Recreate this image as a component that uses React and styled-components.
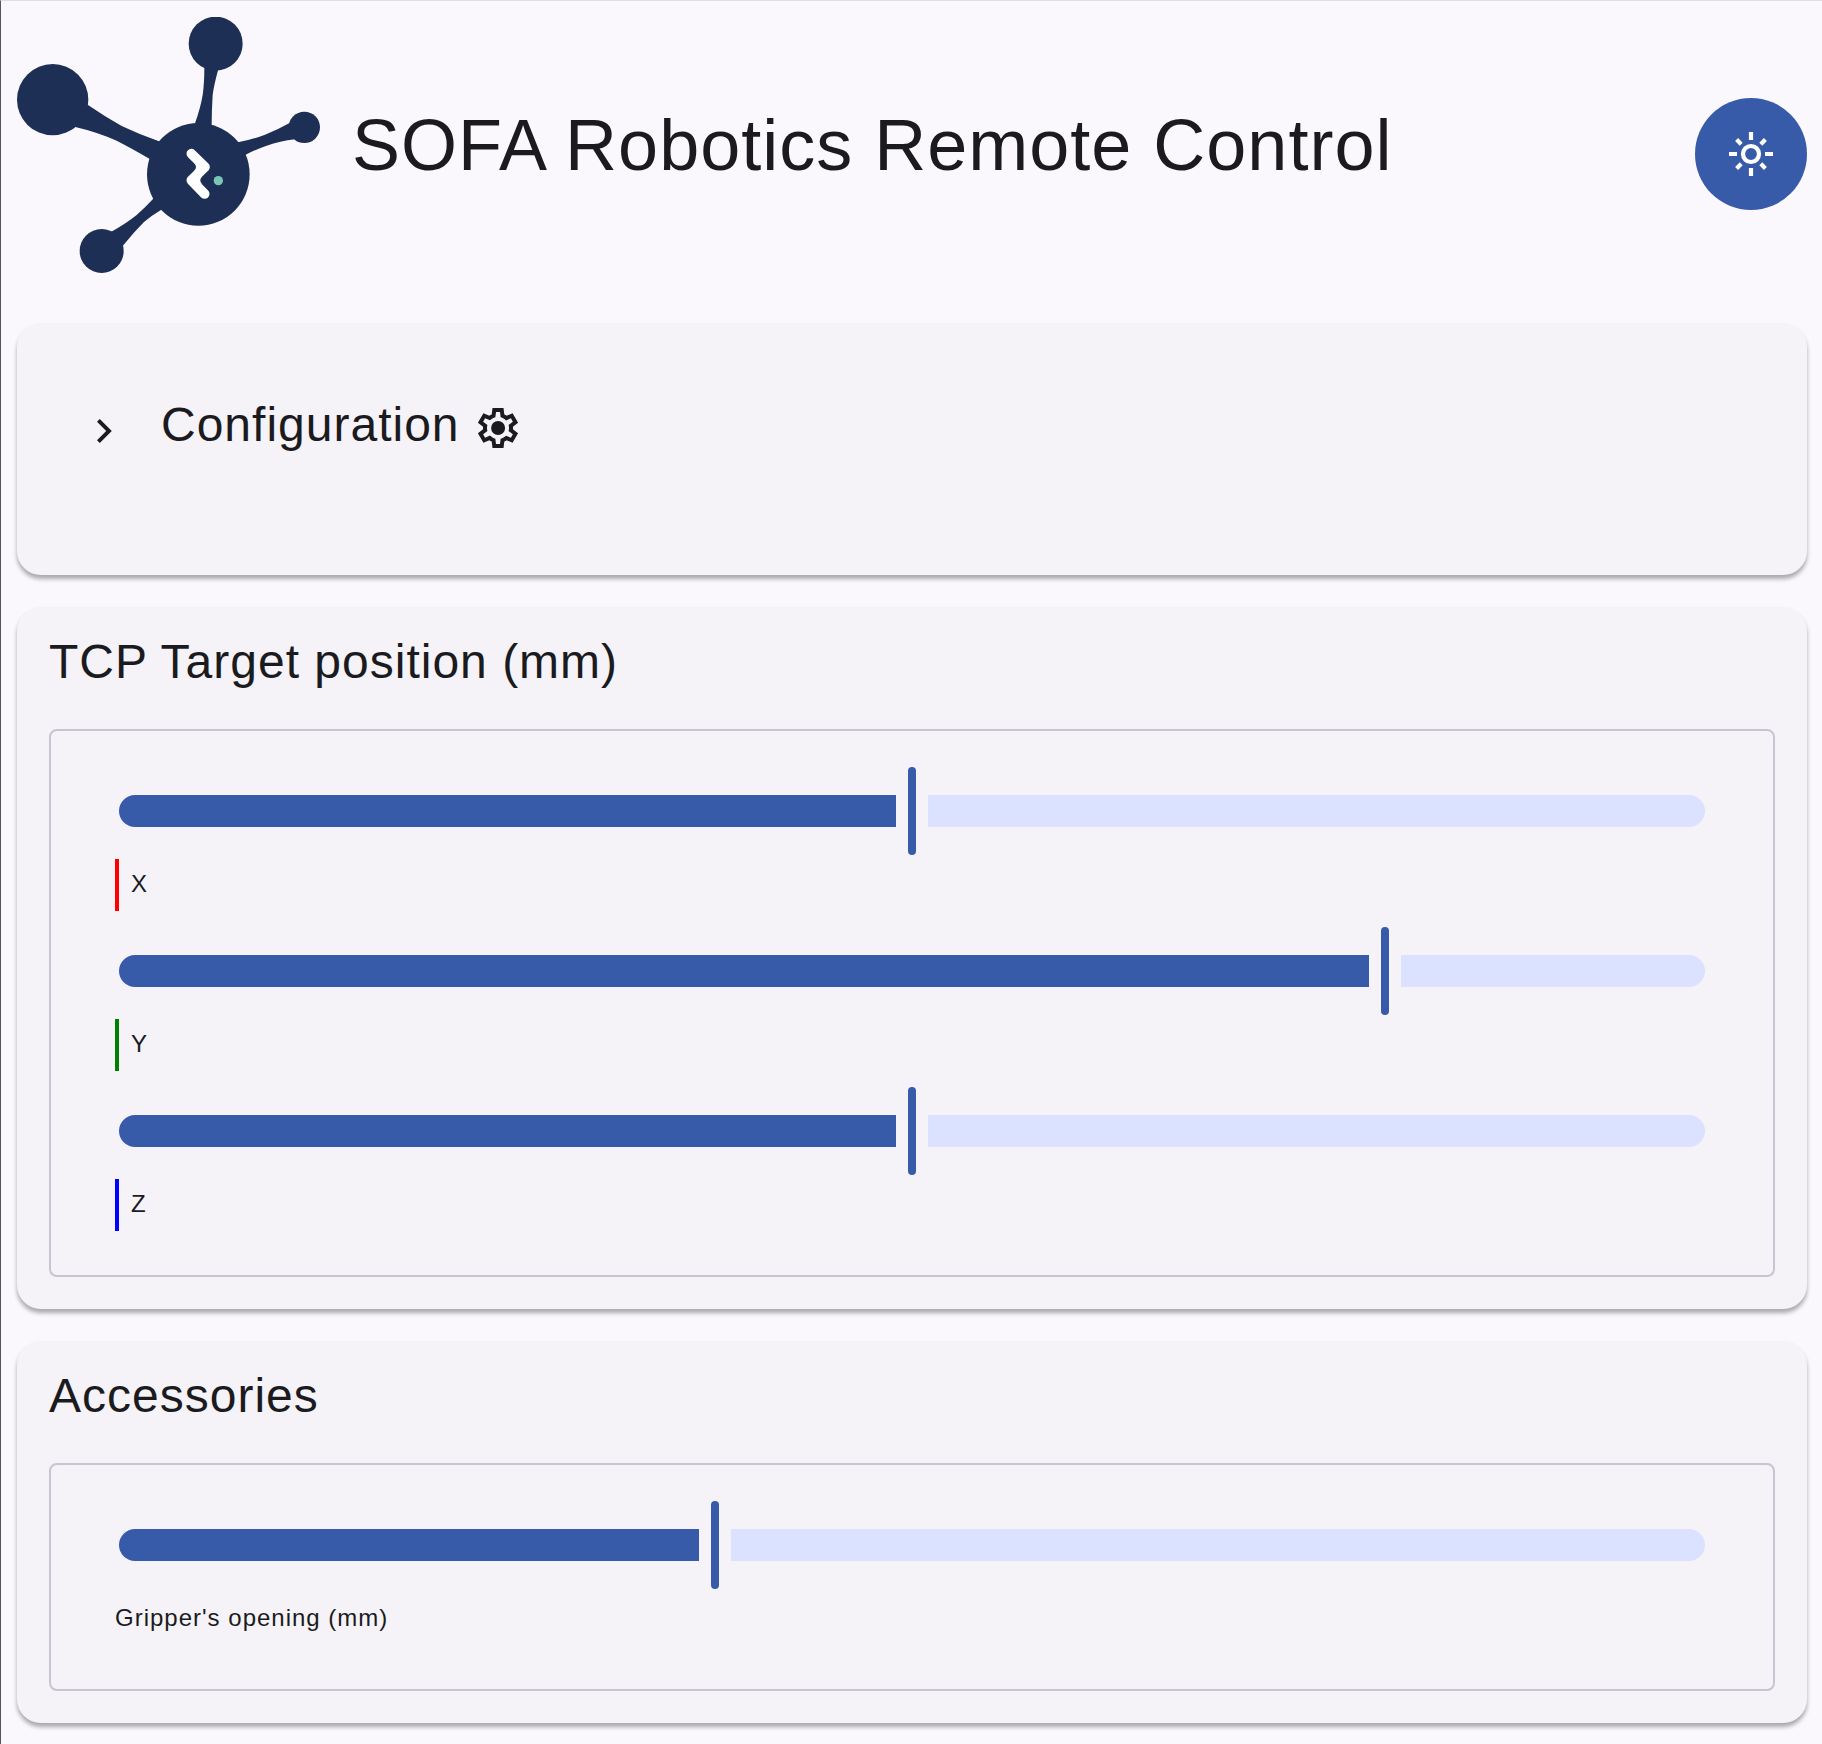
import React, { useId, useState } from "react";
import styled, { createGlobalStyle, ThemeProvider } from "styled-components";

const theme = {
  primary: "#385ba9",
  primaryContainer: "#dae2ff",
  background: "#faf8fd",
  card: "#f5f3f7",
  text: "#1b1b1f",
  outline: "#c5c6d0",
  navy: "#1d2f55",
  mint: "#7cc5b4",
};

const GlobalStyle = createGlobalStyle`
  *, *::before, *::after { box-sizing: border-box; }
  body {
    margin: 0;
    background: ${theme.background};
    color: ${theme.text};
    font-family: "Liberation Sans", Arial, Helvetica, sans-serif;
    font-size: 24px;
    letter-spacing: 1px;
  }
  h1, h2 { margin: 0; font-weight: 400; }
`;

const Page = styled.div`
  min-height: 100vh;
  padding: 16px 15px 20px 16px;
  border-top: 1px solid #dee0df;
  border-left: 1px solid #57545a;
`;

const Header = styled.header`
  display: flex;
  align-items: center;
  justify-content: space-between;
  margin-bottom: 32px;
`;

const Brand = styled.div`
  display: flex;
  align-items: center;
  gap: 32px;
  padding-bottom: 18px;
`;

const Logo = styled.svg`
  display: block;
  width: 303px;
  height: 256px;
  flex: none;
`;

const Title = styled.h1`
  font-size: 72px;
  line-height: 80px;
`;

const RoundButton = styled.button`
  display: grid;
  place-items: center;
  flex: none;
  width: 112px;
  height: 112px;
  padding: 0;
  border: 0;
  border-radius: 50%;
  background: ${(p) => p.theme.primary};
  color: #ffffff;
  cursor: pointer;
`;

const Icon = styled.svg`
  width: 48px;
  height: 48px;
  flex: none;
  fill: currentColor;
  vertical-align: middle;
`;

const Main = styled.main`
  display: flex;
  flex-direction: column;
  gap: 32px;
`;

const Card = styled.section`
  padding: ${(p) => (p.$roomy ? "72px 64px 120px" : "32px")};
  border-radius: 24px;
  background: ${(p) => p.theme.card};
  box-shadow: 0 4px 4px 0 rgba(0, 0, 0, 0.32);
`;

const CardTitle = styled.h2`
  margin-bottom: 44px;
  font-size: 48px;
  line-height: 46px;
`;

const ToggleTitle = styled.h2`
  display: flex;
  font-size: 48px;
  line-height: 60px;
`;

const Toggle = styled.button`
  display: flex;
  align-items: flex-end;
  gap: 32px;
  padding: 0;
  border: 0;
  background: none;
  color: inherit;
  font: inherit;
  letter-spacing: inherit;
  cursor: pointer;
`;

const ToggleLabel = styled.span`
  height: 60px;
  white-space: nowrap;
`;

const Group = styled.div`
  display: flex;
  flex-direction: column;
  gap: 16px;
  padding: 36px 64px 44px;
  border: 2px solid ${(p) => p.theme.outline};
  border-radius: 8px;
`;

const Field = styled.div`
  display: flex;
  flex-direction: column;
  gap: 4px;
`;

const FieldLabel = styled.label`
  padding-bottom: 2px;
  line-height: 50px;
  ${(p) => p.$axis && `padding-left: 12px; border-left: 4px solid ${p.$axis};`}
`;

const Range = styled.input`
  --centre: calc(4px + (100% - 8px) * var(--ratio));
  appearance: none;
  display: block;
  height: 88px;
  margin: 0 4px;
  background: none;
  cursor: pointer;

  &::-webkit-slider-runnable-track {
    height: 32px;
    border-radius: 16px;
    background: linear-gradient(
      to right,
      ${(p) => p.theme.primary} calc(var(--centre) - 16px),
      transparent calc(var(--centre) - 16px),
      transparent calc(var(--centre) + 16px),
      ${(p) => p.theme.primaryContainer} calc(var(--centre) + 16px)
    );
  }

  &::-webkit-slider-thumb {
    appearance: none;
    width: 8px;
    height: 88px;
    margin-top: -28px;
    border-radius: 4px;
    background: ${(p) => p.theme.primary};
  }
`;

function Slider({ label, axis, initial }) {
  const id = useId();
  const [value, setValue] = useState(initial);
  return (
    <Field>
      <Range
        id={id}
        type="range"
        min="0"
        max="1000"
        value={value}
        onChange={(e) => setValue(Number(e.target.value))}
        style={{ "--ratio": value / 1000 }}
      />
      <FieldLabel htmlFor={id} $axis={axis}>
        {label}
      </FieldLabel>
    </Field>
  );
}

function RobotLogo() {
  return (
    <Logo viewBox="51 51 909 768" aria-hidden="true">
      <g fill={theme.navy}>
        <circle cx="158" cy="299" r="107" />
        <circle cx="647" cy="131" r="81" />
        <circle cx="913" cy="382" r="47" />
        <circle cx="305" cy="753" r="66" />
        <circle cx="595" cy="523" r="154" />
        <path d="M200 372 L226 381 Q290 396 350 422 Q395 445 448 476 L500 500 L520 430 L477 424 Q420 404 365 378 Q315 350 264 315 L230 290Z" />
        <path d="M613 195 L613 205 Q613 250 608 285 Q602 322 585 370 L590 400 L640 400 L635 376 Q635 330 638 285 Q642 255 654 211 L654 195Z" />
        <path d="M700 430 L714 427 Q755 419 795 404 Q835 388 870 368 L900 360 L905 415 L885 418 Q840 423 800 437 Q768 448 737 464 L710 475Z" />
        <path d="M480 580 L459 597 Q435 623 410 645 Q380 669 338 693 L320 700 L350 750 L370 736 Q398 700 432 666 Q455 646 484 629 L510 610Z" />
      </g>
      <path
        d="M574 461 L615 501 L574 541 L614 582"
        fill="none"
        stroke="#ffffff"
        strokeWidth="29"
        strokeLinecap="round"
        strokeLinejoin="round"
      />
      <path
        d="M582 489 Q594 501 582 513 L600 501Z M607 529 Q594 541 607 553 L590 541Z"
        fill="#ffffff"
      />
      <circle cx="655" cy="542" r="14" fill={theme.mint} />
    </Logo>
  );
}

function SunIcon() {
  return (
    <Icon viewBox="0 0 24 24" aria-hidden="true">
      <g fill="none" stroke="currentColor" strokeWidth="2.1">
        <circle cx="12" cy="12" r="4" />
        <path d="M12 1v4M12 19v4M1 12h4M19 12h4M4.8 4.8l2.3 2.3M16.9 16.9l2.3 2.3M4.8 19.2l2.3-2.3M16.9 7.1l2.3-2.3" />
      </g>
    </Icon>
  );
}

function ChevronIcon() {
  return (
    <Icon viewBox="0 0 24 24" aria-hidden="true">
      <path d="M12.6 12 8 7.4 9.4 6l6 6-6 6L8 16.6Z" />
    </Icon>
  );
}

function GearIcon() {
  return (
    <Icon viewBox="0 -960 960 960" aria-hidden="true">
      <path d="m370-80-16-128q-13-5-24.5-12T307-235l-119 50L78-375l103-78q-1-7-1-13.5v-27q0-6.5 1-13.5L78-585l110-190 119 50q11-8 23-15t24-12l16-128h220l16 128q13 5 24.5 12t22.5 15l119-50 110 190-103 78q1 7 1 13.5v27q0 6.5-2 13.5l103 78-110 190-118-50q-11 8-23 15t-24 12L590-80H370Zm70-80h79l14-106q31-8 57.5-23.5T639-327l99 41 39-68-86-65q5-14 7-29.5t2-31.5q0-16-2-31.5t-7-29.5l86-65-39-68-99 42q-22-23-48.5-38.5T533-694l-13-106h-79l-14 106q-31 8-57.5 23.5T321-633l-99-41-39 68 86 64q-5 15-7 30t-2 32q0 16 2 31t7 30l-86 65 39 68 99-42q22 23 48.5 38.5T427-266l13 106Zm42-180q58 0 99-41t41-99q0-58-41-99t-99-41q-59 0-99.5 41T342-480q0 58 40.5 99t99.5 41Z" />
    </Icon>
  );
}

export default function App() {
  return (
    <ThemeProvider theme={theme}>
      <GlobalStyle />
      <Page>
        <Header>
          <Brand>
            <RobotLogo />
            <Title>SOFA Robotics Remote Control</Title>
          </Brand>
          <RoundButton type="button" aria-label="Light mode">
            <SunIcon />
          </RoundButton>
        </Header>
        <Main>
          <Card $roomy>
            <ToggleTitle>
              <Toggle type="button" aria-expanded="false">
                <ChevronIcon />
                <ToggleLabel>
                  Configuration <GearIcon />
                </ToggleLabel>
              </Toggle>
            </ToggleTitle>
          </Card>
          <Card>
            <CardTitle>TCP Target position (mm)</CardTitle>
            <Group>
              <Slider label="X" axis="#ff0000" initial={500} />
              <Slider label="Y" axis="#008000" initial={800} />
              <Slider label="Z" axis="#0000ff" initial={500} />
            </Group>
          </Card>
          <Card>
            <CardTitle>Accessories</CardTitle>
            <Group>
              <Slider label="Gripper's opening (mm)" initial={375} />
            </Group>
          </Card>
        </Main>
      </Page>
    </ThemeProvider>
  );
}
